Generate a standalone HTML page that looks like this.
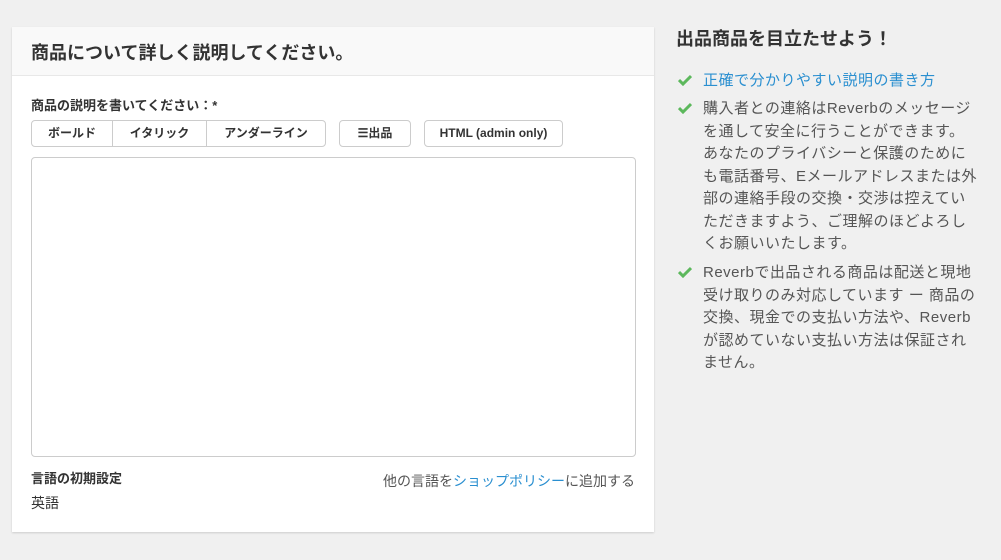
<!DOCTYPE html>
<html><head><meta charset="utf-8"><style>
*{box-sizing:border-box;margin:0;padding:0}
body{width:1001px;height:560px;background:#f0f0f0;font-family:"Liberation Sans","Noto Sans CJK JP",sans-serif;color:#333;position:relative;overflow:hidden}
.card{position:absolute;left:12px;top:27px;width:642px;height:505px;background:#fff;box-shadow:0 1px 2px rgba(0,0,0,.15)}
.hd{height:49px;background:#f9f9f9;border-bottom:1px solid #e8e8e8;padding:12px 19px;font-size:18px;font-weight:bold;color:#333}
.lbl{position:absolute;left:19px;top:68px;font-size:13px;font-weight:bold}
.btn{position:absolute;top:93px;height:27px;border:1px solid #ccc;border-radius:4px;font-size:12px;font-weight:bold;line-height:25px;text-align:center;background:#fff}
.grp{display:flex;padding:0}
.grp span{border-right:1px solid #ccc;height:25px;text-align:center}
.grp span:last-child{border-right:none}
.ta{position:absolute;left:19px;top:130px;width:605px;height:300px;border:1px solid #ccc;border-radius:4px}
.side{position:absolute;left:676px;top:27px}
.side h2{font-size:18px;font-weight:bold;color:#333;line-height:22px}
.item{position:absolute;left:27px;font-size:15px;line-height:22.5px;color:#555;white-space:nowrap;letter-spacing:0.5px}
.ck{position:absolute;left:-25px;top:4px}
a{color:#2a8fd0;text-decoration:none}
</style></head><body>
<div class="card">
<div class="hd">商品について詳しく説明してください。</div>
<div class="lbl">商品の説明を書いてください：*</div>
<div class="btn grp" style="left:19px;width:295px"><span style="width:81px">ボールド</span><span style="width:94px">イタリック</span><span style="width:118px">アンダーライン</span></div>
<div class="btn" style="left:327px;width:72px">☰出品</div>
<div class="btn" style="left:412px;width:139px">HTML (admin only)</div>
<div class="ta"></div>
<div style="position:absolute;left:19px;top:441px;font-size:13px;font-weight:bold">言語の初期設定</div>
<div style="position:absolute;left:19px;top:466px;font-size:14px">英語</div>
<div style="position:absolute;right:19px;top:444px;font-size:14px;color:#555">他の言語を<a>ショップポリシー</a>に追加する</div>
</div>
<div class="side">
<h2 style="position:absolute;top:1px;white-space:nowrap">出品商品を目立たせよう！</h2>
<div class="item" style="top:43px"><svg class="ck" width="14" height="12" viewBox="0 0 14 12"><path d="M1 6l4 4 8-8" stroke="#5cb85c" stroke-width="3" fill="none"/></svg><a>正確で分かりやすい説明の書き方</a></div>
<div class="item" style="top:71px"><svg class="ck" width="14" height="12" viewBox="0 0 14 12"><path d="M1 6l4 4 8-8" stroke="#5cb85c" stroke-width="3" fill="none"/></svg>購入者との連絡はReverbのメッセージ<br>を通して安全に行うことができます。<br>あなたのプライバシーと保護のために<br>も電話番号、Eメールアドレスまたは外<br>部の連絡手段の交換・交渉は控えてい<br>ただきますよう、ご理解のほどよろし<br>くお願いいたします。</div>
<div class="item" style="top:235px"><svg class="ck" width="14" height="12" viewBox="0 0 14 12"><path d="M1 6l4 4 8-8" stroke="#5cb85c" stroke-width="3" fill="none"/></svg>Reverbで出品される商品は配送と現地<br>受け取りのみ対応しています ー 商品の<br>交換、現金での支払い方法や、Reverb<br>が認めていない支払い方法は保証され<br>ません。</div>
</div>
</body></html>
